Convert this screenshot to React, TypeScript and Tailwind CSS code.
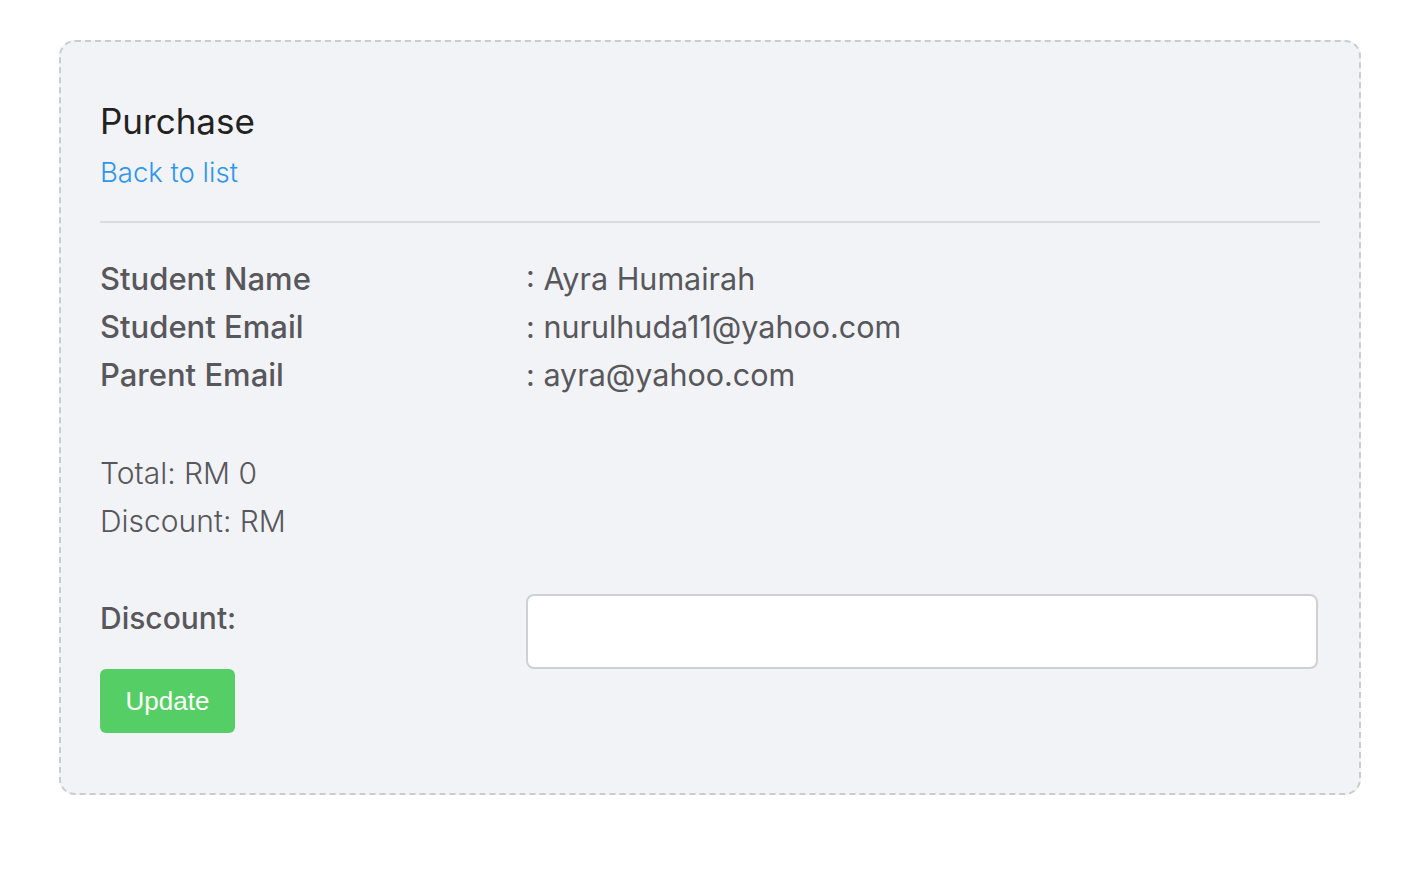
import React, { useState } from 'react';

const rows = [
  { label: 'Student Name', value: 'Ayra Humairah' },
  { label: 'Student Email', value: 'nurulhuda11@yahoo.com' },
  { label: 'Parent Email', value: 'ayra@yahoo.com' },
];

const App: React.FC = () => {
  const [discount, setDiscount] = useState('');

  return (
    <div className="min-h-screen bg-white pt-[40px] pl-[59px] font-['Inter','Noto_Sans',sans-serif]">
      <div className="w-[1302px] rounded-[16px] border-2 border-dashed border-[#cbcbd0] bg-[#f2f3f7] px-[39px] pt-[57px] pb-[60px]">
        <h1 className="text-[35px] leading-[44px] text-[#222222]">Purchase</h1>
        <a href="#" className="mt-[9px] block text-[27.5px] leading-[40px] text-[#2f96ee] font-light">
          Back to list
        </a>

        <hr className="mt-[29px] border-t-2 border-[#dadbdf]" />

        <div className="mt-[32px]">
          {rows.map((row) => (
            <div key={row.label} className="grid grid-cols-[426px_1fr] leading-[48px] text-[#57575c]">
              <span className="text-[31px] font-medium">{row.label}</span>
              <span className="text-[30.5px]">: {row.value}</span>
            </div>
          ))}
        </div>

        <div className="mt-[50px] text-[30px] leading-[48px] text-[#57575c] font-light">
          <p>Total: RM 0</p>
          <p>Discount: RM</p>
        </div>

        <div className="mt-[49px] grid grid-cols-[426px_1fr] items-start">
          <div>
            <label className="block pt-[4px] text-[30px] leading-[40px] text-[#57575c] font-medium">Discount:</label>
            <button className="mt-[31px] h-[64px] w-[135px] rounded-[6px] bg-[#55cf65] text-[26px] text-white font-['Liberation_Sans',sans-serif]">
              Update
            </button>
          </div>
          <input
            type="text"
            value={discount}
            onChange={(e) => setDiscount(e.target.value)}
            className="h-[75px] w-[792px] rounded-[8px] border-2 border-[#d0d0d4] bg-white px-4 text-[24px] outline-none"
          />
        </div>
      </div>
    </div>
  );
};

export default App;
